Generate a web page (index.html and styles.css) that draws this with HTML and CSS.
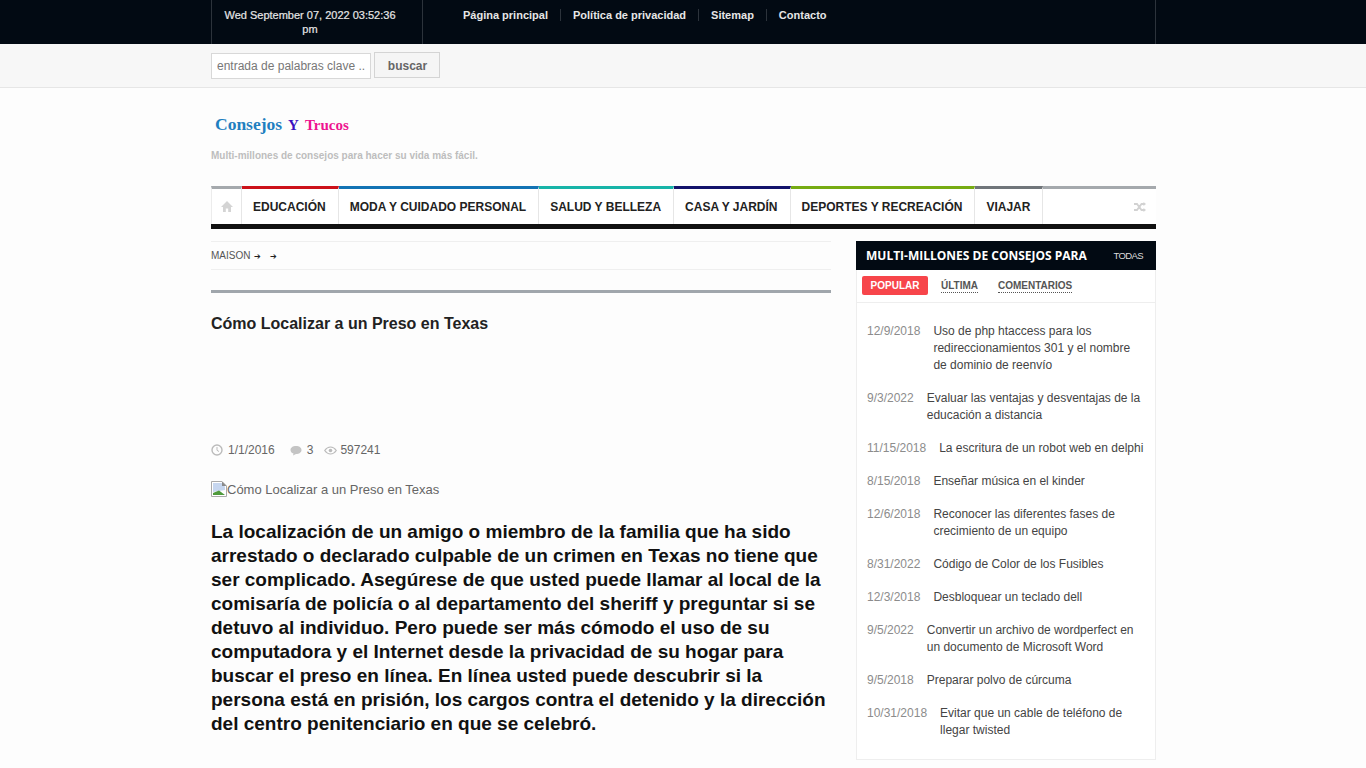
FILE: index.html
```html
<!DOCTYPE html>
<html lang="es">
<head>
    <meta charset="UTF-8">
    <meta name="viewport" content="width=device-width, initial-scale=1.0">
    <title>Cómo Localizar a un Preso en Texas</title>
    <link rel="stylesheet" href="styles.css">
</head>
<body>
    <div class="topbar">
        <div class="wrap topbar-inner">
            <div class="clock">Wed September 07, 2022 03:52:36 pm</div>
            <ul class="toplinks">
                <li><a href="#">Página principal</a></li>
                <li><a href="#">Política de privacidad</a></li>
                <li><a href="#">Sitemap</a></li>
                <li><a href="#">Contacto</a></li>
            </ul>
        </div>
    </div>

    <div class="searchbar">
        <div class="wrap search-inner">
            <input class="search-input" type="text" placeholder="entrada de palabras clave ...">
            <button class="search-btn">buscar</button>
        </div>
    </div>

    <div class="wrap">
        <div class="logo"><span class="logo-a">Consejos</span><span class="logo-b">Y</span><span class="logo-c">Trucos</span></div>
        <p class="tagline">Multi-millones de consejos para hacer su vida más fácil.</p>

        <nav class="mainnav">
            <a class="nav-home" href="#">
                <svg width="12" height="11" viewBox="0 0 12 11"><path fill="#d4d4d4" d="M6 0 12 6H10V11H7.2V7.5H4.8V11H2V6H0Z"/></svg>
            </a>
            <a class="nav-item c-red" href="#">EDUCACIÓN</a>
            <a class="nav-item c-blue" href="#">MODA Y CUIDADO PERSONAL</a>
            <a class="nav-item c-teal" href="#">SALUD Y BELLEZA</a>
            <a class="nav-item c-navy" href="#">CASA Y JARDÍN</a>
            <a class="nav-item c-green" href="#">DEPORTES Y RECREACIÓN</a>
            <a class="nav-item c-gray" href="#">VIAJAR</a>
            <span class="nav-fill">
                <svg width="12" height="10" viewBox="0 0 12 10"><path fill="none" stroke="#d2d2d2" stroke-width="1.8" d="M0 2H3L7.5 8H10M0 8H3L7.5 2H10"/><path fill="#d2d2d2" d="M9.5 0 12 2 9.5 4ZM9.5 6 12 8 9.5 10Z"/></svg>
            </span>
        </nav>

        <div class="columns">
            <main class="content">
                <div class="crumbs">MAISON <span class="arrow">➔</span> <span class="arrow second">➔</span></div>
                <h1 class="post-title">Cómo Localizar a un Preso en Texas</h1>
                <div class="post-meta">
                    <span class="meta-item meta-date">
                        <svg width="12" height="12" viewBox="0 0 12 12"><circle cx="6" cy="6" r="5" fill="none" stroke="#bbb" stroke-width="1.4"/><path fill="none" stroke="#bbb" d="M6 3V6.3L8 7.5"/></svg>
                        1/1/2016
                    </span>
                    <span class="meta-item meta-comments">
                        <svg width="12" height="11" viewBox="0 0 12 11"><path fill="#c4c4c4" d="M6 1C9 1 11.500 2.500 11.500 5S9 9 6 9L3 10.500 3.500 8.500C1.500 8 .5 6.500 .5 5 .5 2.500 3 1 6 1Z"/></svg>
                        3
                    </span>
                    <span class="meta-item meta-views">
                        <svg width="13" height="9" viewBox="0 0 13 9"><path fill="none" stroke="#bbb" stroke-width="1.2" d="M.7 4.500C2.500 2 4.500 1 6.500 1S10.500 2 12.300 4.500C10.500 7 8.500 8 6.500 8S2.500 7 .7 4.500Z"/><circle cx="6.500" cy="4.500" r="1.800" fill="#bbb"/></svg>
                        597241
                    </span>
                </div>
                <div class="broken-img">
                    <svg width="16" height="16" viewBox="0 0 16 16"><path fill="#fff" stroke="#a9a9a9" d="M.5.5H11L15.500 5V15.500H.5Z"/><path fill="#c6d6ef" d="M2 2H10.500L14 5.500V9L2 11Z"/><path fill="#4f9a3c" d="M2 14V12L8 9.500 14 14Z"/><path fill="#8a8a8a" d="M11 .5V5H15.500Z"/></svg>Cómo Localizar a un Preso en Texas
                </div>
                <p class="lead">La localización de un amigo o miembro de la familia que ha sido arrestado o declarado culpable de un crimen en Texas no tiene que ser complicado. Asegúrese de que usted puede llamar al local de la comisaría de policía o al departamento del sheriff y preguntar si se detuvo al individuo. Pero puede ser más cómodo el uso de su computadora y el Internet desde la privacidad de su hogar para buscar el preso en línea. En línea usted puede descubrir si la persona está en prisión, los cargos contra el detenido y la dirección del centro penitenciario en que se celebró.</p>
            </main>

            <aside class="sidebar">
                <div class="side-head">
                    <span class="side-title">MULTI-MILLONES DE CONSEJOS PARA</span>
                    <a class="side-all" href="#">TODAS</a>
                </div>
                <div class="side-tabs">
                    <a class="tab active" href="#">POPULAR</a>
                    <a class="tab" href="#">ÚLTIMA</a>
                    <a class="tab" href="#">COMENTARIOS</a>
                </div>
                <ul class="side-list">
                    <li><span class="d">12/9/2018</span><a href="#">Uso de php htaccess para los redireccionamientos 301 y el nombre de dominio de reenvío</a></li>
                    <li><span class="d">9/3/2022</span><a href="#">Evaluar las ventajas y desventajas de la educación a distancia</a></li>
                    <li><span class="d">11/15/2018</span><a href="#">La escritura de un robot web en delphi</a></li>
                    <li><span class="d">8/15/2018</span><a href="#">Enseñar música en el kinder</a></li>
                    <li><span class="d">12/6/2018</span><a href="#">Reconocer las diferentes fases de crecimiento de un equipo</a></li>
                    <li><span class="d">8/31/2022</span><a href="#">Código de Color de los Fusibles</a></li>
                    <li><span class="d">12/3/2018</span><a href="#">Desbloquear un teclado dell</a></li>
                    <li><span class="d">9/5/2022</span><a href="#">Convertir un archivo de wordperfect en un documento de Microsoft Word</a></li>
                    <li><span class="d">9/5/2018</span><a href="#">Preparar polvo de cúrcuma</a></li>
                    <li><span class="d">10/31/2018</span><a href="#">Evitar que un cable de teléfono de llegar twisted</a></li>
                </ul>
            </aside>
        </div>
    </div>
</body>
</html>
```

FILE: styles.css
```css
* {
    margin: 0;
    padding: 0;
    box-sizing: border-box;
}

body {
    font-family: 'Liberation Sans', Arial, sans-serif;
    font-size: 12px;
    background: #fdfdfd;
    color: #333;
}

a {
    color: inherit;
    text-decoration: none;
}

ul {
    list-style: none;
}

.wrap {
    width: 945px;
    margin-left: 211px;
}

.topbar {
    height: 44px;
    background: #020a13;
    color: #e6e6e6;
    font-size: 11px;
    font-weight: bold;
}

.topbar-inner {
    display: flex;
    height: 44px;
    border-left: 1px solid #2c333b;
    border-right: 1px solid #2c333b;
}

.clock {
    width: 211px;
    padding: 8px 20px 0 6px;
    border-right: 1px solid #2c333b;
    text-align: center;
    line-height: 14px;
    font-weight: normal;
    -webkit-text-stroke: 0.2px #e6e6e6;
}

.toplinks {
    display: flex;
    padding: 9px 0 0 28px;
}

.toplinks li {
    height: 12px;
    line-height: 12px;
    padding: 0 12px;
    border-left: 1px solid #2c333b;
}

.toplinks li:first-child {
    border-left: none;
}

.searchbar {
    height: 44px;
    background: #f7f7f7;
    border-bottom: 1px solid #e6e6e6;
}

.search-inner {
    display: flex;
    align-items: flex-start;
    gap: 3px;
    padding-top: 8px;
}

.search-input {
    width: 160px;
    height: 26px;
    margin-top: 1px;
    padding: 0 5px;
    border: 1px solid #d8d8d8;
    background: #fff;
    font-family: inherit;
    font-size: 12px;
}

.search-input::placeholder {
    color: #777;
    opacity: 1;
}

.search-btn {
    width: 66px;
    height: 26px;
    padding: 2px 0 0 1px;
    border: 1px solid #d4d4d4;
    background: #f5f5f5;
    color: #666;
    font-family: inherit;
    font-size: 12px;
    font-weight: bold;
}

.logo {
    padding: 27px 0 0 4px;
    height: 55px;
    font-family: 'Liberation Serif', serif;
    font-weight: bold;
    line-height: 18px;
}

.logo-a {
    font-size: 17.5px;
    color: #1f7fc0;
}

.logo-b {
    font-size: 15px;
    color: #3a10c0;
    margin-left: 6px;
}

.logo-c {
    font-size: 15px;
    color: #ee1490;
    margin-left: 6px;
}

.tagline {
    margin-top: 7px;
    height: 36px;
    line-height: 12px;
    font-size: 10px;
    font-weight: bold;
    color: #bdbdbd;
}

.mainnav {
    display: flex;
    height: 43px;
    border-bottom: 5px solid #111;
    background: #fff;
}

.nav-home {
    display: flex;
    align-items: center;
    justify-content: center;
    width: 31px;
    border-top: 3px solid #a5a9ad;
    border-left: 1px solid #ececec;
    border-right: 1px solid #e6e6e6;
}

.nav-item {
    padding: 1px 12px 0 11px;
    border-top: 3px solid #888;
    border-right: 1px solid #e6e6e6;
    line-height: 35px;
    font-size: 12px;
    font-weight: bold;
    color: #222;
    white-space: nowrap;
}

.c-red { border-top-color: #cc1119; }
.c-blue { border-top-color: #1273b4; }
.c-teal { border-top-color: #17b4a8; }
.c-navy { border-top-color: #13136b; }
.c-green { border-top-color: #76ab12; }
.c-gray { border-top-color: #70757a; }

.nav-fill {
    flex: 1;
    display: flex;
    align-items: center;
    justify-content: flex-end;
    padding-right: 10px;
    border-top: 3px solid #a5a9ad;
}

.columns {
    display: flex;
    justify-content: space-between;
    padding-top: 12px;
}

.content {
    width: 620px;
}

.crumbs {
    height: 29px;
    border-top: 1px solid #efefef;
    border-bottom: 1px solid #efefef;
    line-height: 27px;
    font-size: 10px;
    color: #555;
}

.arrow {
    font-size: 8px;
    color: #222;
    margin-left: 1px;
}

.arrow.second {
    margin-left: 6px;
}

.post-title {
    margin-top: 20px;
    padding-top: 22px;
    height: 152px;
    border-top: 3px solid #a0a6ac;
    font-size: 16px;
    line-height: 18px;
    font-weight: bold;
    color: #222;
}

.post-meta {
    display: flex;
    align-items: center;
    height: 16px;
    color: #666;
}

.meta-item {
    display: flex;
    align-items: center;
    gap: 5px;
}

.meta-date {
    margin-right: 15px;
}

.meta-comments {
    margin-right: 11px;
}

.meta-views {
    gap: 3px;
}

.broken-img {
    display: flex;
    align-items: center;
    height: 16px;
    margin-top: 23px;
    font-size: 13px;
    color: #666;
    white-space: nowrap;
}

.lead {
    margin-top: 23px;
    font-size: 19px;
    line-height: 24px;
    font-weight: bold;
    color: #111;
}

.sidebar {
    width: 300px;
    height: 519px;
    border: 1px solid #eee;
    border-top: none;
    background: #fff;
}

.side-head {
    display: flex;
    align-items: center;
    justify-content: space-between;
    height: 29px;
    margin: 0 -1px;
    padding: 0 13px 0 10px;
    background: #020a13;
    color: #fff;
}

.side-title {
    font-family: 'Open Sans', sans-serif;
    font-size: 12px;
    font-weight: bold;
}

.side-all {
    font-size: 9.5px;
    letter-spacing: -0.6px;
    color: #ddd;
}

.side-tabs {
    display: flex;
    align-items: center;
    height: 33px;
    padding: 0 0 2px 5px;
    border-bottom: 1px solid #eee;
}

.tab {
    margin-top: 2px;
    margin-right: 20px;
    border-bottom: 1px dotted #555;
    line-height: 12px;
    font-size: 10px;
    font-weight: bold;
    color: #555;
}

.tab.active {
    width: 66px;
    height: 19px;
    margin-top: 0;
    margin-right: 13px;
    line-height: 19px;
    text-align: center;
    background: #f7454a;
    color: #fff;
    border: none;
    border-radius: 2px;
}

.side-list {
    padding: 20px 10px 0;
}

.side-list li {
    display: flex;
    margin-bottom: 16px;
    line-height: 17px;
    color: #444;
}

.d {
    flex: none;
    margin-right: 13px;
    color: #8c8c8c;
}
```
